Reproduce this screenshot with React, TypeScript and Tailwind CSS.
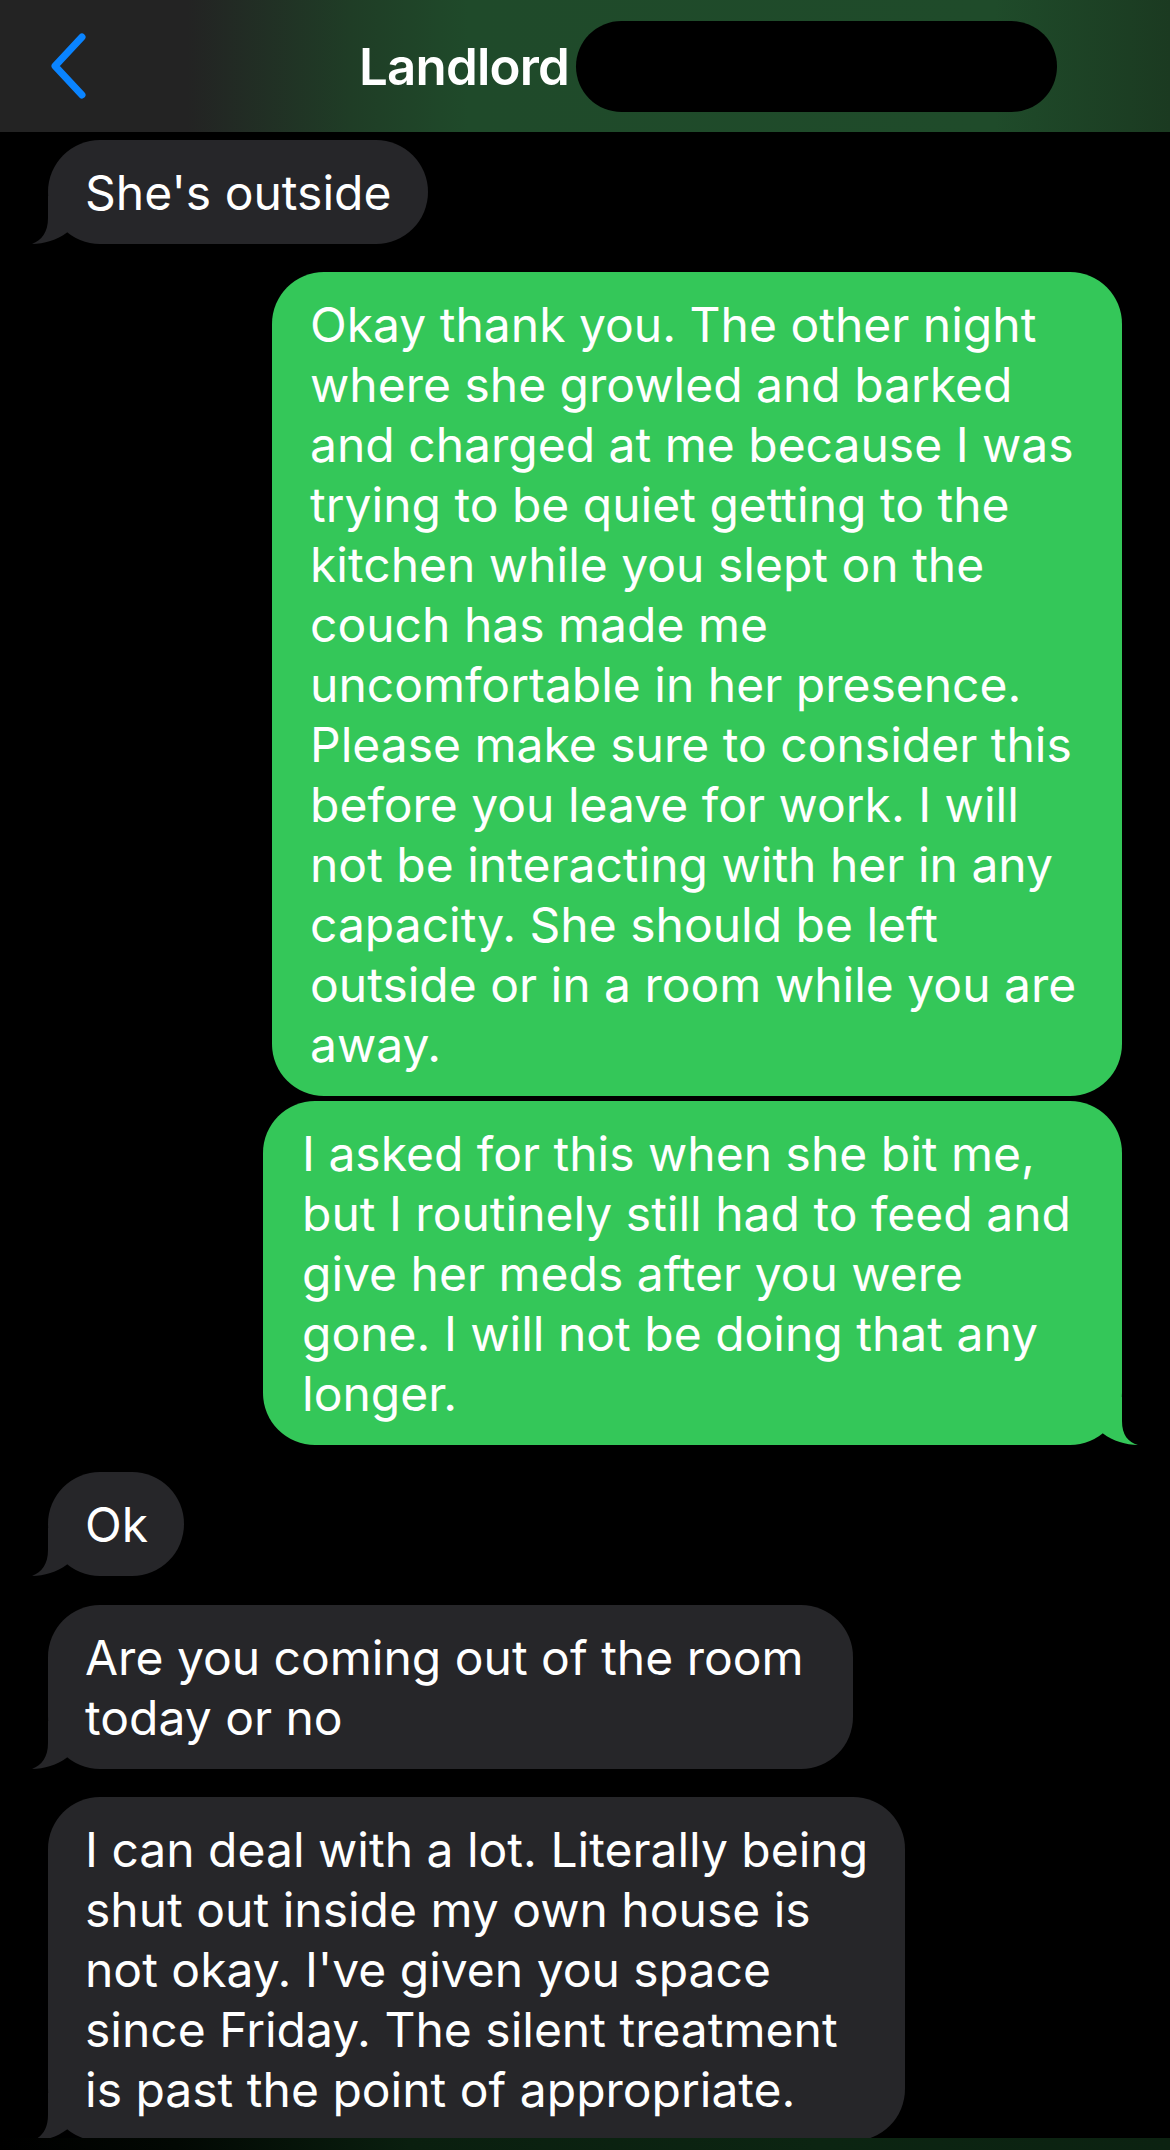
import React from "react";

const font = { fontFamily: "Inter, 'Noto Sans', sans-serif" };

function ReceivedTail() {
  return (
    <svg
      className="absolute bottom-0 left-[-16px]"
      width="40"
      height="48"
      viewBox="0 0 40 48"
    >
      <path
        d="M16,0 L16,22 C16,36 10,44 0,48 C12,48 25,44 35,36.5 L35,0 Z"
        fill="#262629"
      />
    </svg>
  );
}

function SentTail() {
  return (
    <svg
      className="absolute bottom-0 right-[-16px]"
      width="40"
      height="48"
      viewBox="0 0 40 48"
    >
      <path
        d="M24,0 L24,24 C24,38 30,45 40,48 C28,48 15,44 5,36.5 L5,0 Z"
        fill="#34c759"
      />
    </svg>
  );
}

function Lines({ lines }: { lines: string[] }) {
  return (
    <>
      {lines.map((l, i) => (
        <div key={i} className="whitespace-nowrap">
          {l}
        </div>
      ))}
    </>
  );
}

export default function App() {
  return (
    <div
      className="flex h-[2150px] w-[1170px] flex-col overflow-hidden bg-black text-white"
      style={font}
    >
      {/* Header */}
      <div className="flex h-[132px] shrink-0 items-center bg-[linear-gradient(90deg,#232323_0%,#232323_16%,#1f3d26_30%,#1f4a2a_40%,#1f4b2a_85%,#1b3a21_100%)] pl-[48px]">
        <svg width="40" height="66" viewBox="0 0 40 66" className="shrink-0">
          <polyline
            points="34,4 7,33 34,62"
            fill="none"
            stroke="#0a84ff"
            strokeWidth="7"
            strokeLinecap="round"
            strokeLinejoin="round"
          />
        </svg>
        <div className="ml-[271px] text-[51px] font-semibold leading-none tracking-[-0.8px]">
          Landlord
        </div>
        <div className="ml-[7px] h-[91px] w-[481px] rounded-full bg-black" />
      </div>

      {/* Messages */}
      <div className="flex flex-1 flex-col overflow-hidden text-[48px] leading-[60px]">
        <div className="relative ml-[48px] mt-[8px] w-[380px] rounded-[52px] bg-[#262629] px-[37px] pb-[21px] pt-[23px]">
          <Lines lines={["She's outside"]} />
          <ReceivedTail />
        </div>

        <div className="relative mr-[48px] mt-[28px] w-[850px] self-end rounded-[52px] bg-[#34c759] px-[38px] pb-[21px] pt-[23px]">
          <Lines
            lines={[
              "Okay thank you. The other night",
              "where she growled and barked",
              "and charged at me because I was",
              "trying to be quiet getting to the",
              "kitchen while you slept on the",
              "couch has made me",
              "uncomfortable in her presence.",
              "Please make sure to consider this",
              "before you leave for work. I will",
              "not be interacting with her in any",
              "capacity. She should be left",
              "outside or in a room while you are",
              "away.",
            ]}
          />
        </div>

        <div className="relative mr-[48px] mt-[5px] w-[859px] self-end rounded-[52px] bg-[#34c759] px-[39px] pb-[21px] pt-[23px]">
          <Lines
            lines={[
              "I asked for this when she bit me,",
              "but I routinely still had to feed and",
              "give her meds after you were",
              "gone. I will not be doing that any",
              "longer.",
            ]}
          />
          <SentTail />
        </div>

        <div className="relative ml-[48px] mt-[27px] w-[136px] rounded-[52px] bg-[#262629] px-[37px] pb-[21px] pt-[23px]">
          <Lines lines={["Ok"]} />
          <ReceivedTail />
        </div>

        <div className="relative ml-[48px] mt-[29px] w-[805px] rounded-[52px] bg-[#262629] px-[37px] pb-[21px] pt-[23px]">
          <Lines lines={["Are you coming out of the room", "today or no"]} />
          <ReceivedTail />
        </div>

        <div className="relative ml-[48px] mt-[28px] w-[857px] shrink-0 rounded-[52px] bg-[#262629] px-[37px] pb-[21px] pt-[23px]">
          <Lines
            lines={[
              "I can deal with a lot. Literally being",
              "shut out inside my own house is",
              "not okay. I've given you space",
              "since Friday. The silent treatment",
              "is past the point of appropriate.",
            ]}
          />
          <ReceivedTail />
        </div>
      </div>

      {/* Bottom bar edge */}
      <div className="h-[12px] shrink-0 bg-[linear-gradient(90deg,#000000_0%,#020803_15%,#0a1f0f_35%,#0c2512_70%,#0c2211_100%)]" />
    </div>
  );
}
